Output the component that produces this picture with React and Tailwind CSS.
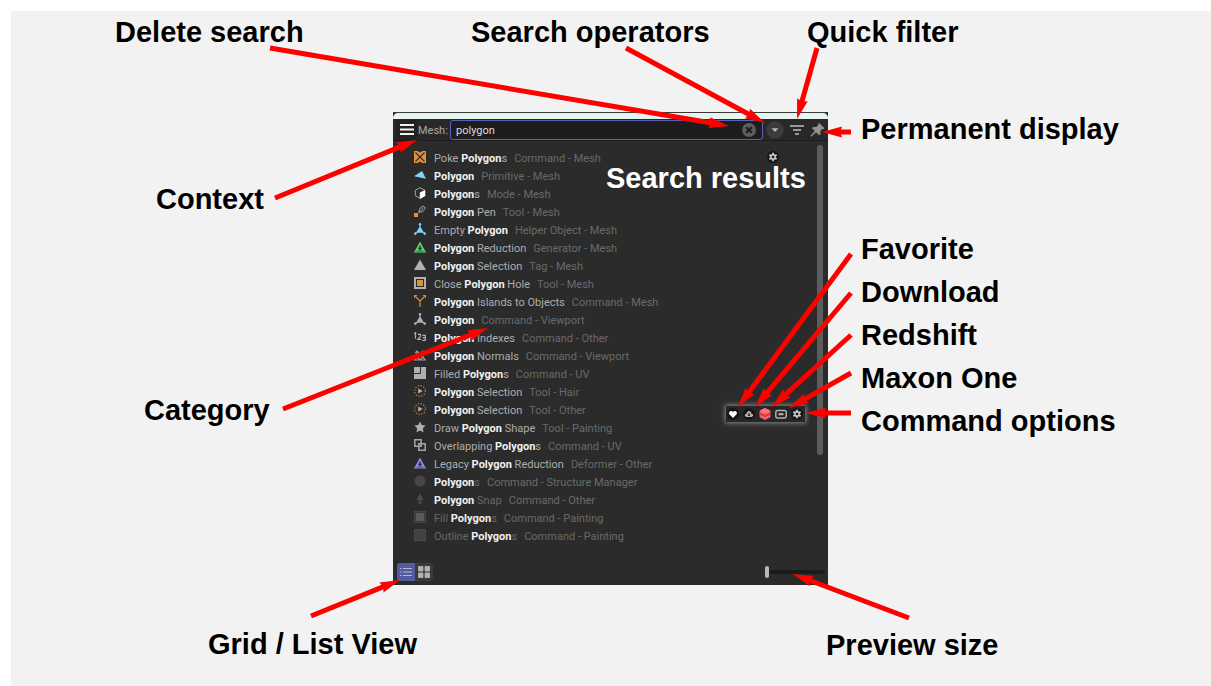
import { useState } from "react";

const rows = [
  { icon: "poke", parts: ["Poke ", "Polygon", "s"], category: "Command - Mesh", options: true },
  { icon: "primitive", parts: ["", "Polygon", ""], category: "Primitive - Mesh" },
  { icon: "mode", parts: ["", "Polygon", "s"], category: "Mode - Mesh" },
  { icon: "pen", parts: ["", "Polygon", " Pen"], category: "Tool - Mesh" },
  { icon: "emptyBlue", parts: ["Empty ", "Polygon", ""], category: "Helper Object - Mesh" },
  { icon: "reduceGreen", parts: ["", "Polygon", " Reduction"], category: "Generator - Mesh" },
  { icon: "triangle", parts: ["", "Polygon", " Selection"], category: "Tag - Mesh" },
  { icon: "hole", parts: ["Close ", "Polygon", " Hole"], category: "Tool - Mesh" },
  { icon: "islands", parts: ["", "Polygon", " Islands to Objects"], category: "Command - Mesh" },
  { icon: "emptyGray", parts: ["", "Polygon", ""], category: "Command - Viewport" },
  { icon: "indexes", parts: ["", "Polygon", " Indexes"], category: "Command - Other" },
  { icon: "normals", parts: ["", "Polygon", " Normals"], category: "Command - Viewport" },
  { icon: "filled", parts: ["Filled ", "Polygon", "s"], category: "Command - UV" },
  { icon: "select", parts: ["", "Polygon", " Selection"], category: "Tool - Hair" },
  { icon: "select", parts: ["", "Polygon", " Selection"], category: "Tool - Other" },
  { icon: "star", parts: ["Draw ", "Polygon", " Shape"], category: "Tool - Painting" },
  { icon: "overlap", parts: ["Overlapping ", "Polygon", "s"], category: "Command - UV" },
  { icon: "reducePurple", parts: ["Legacy ", "Polygon", " Reduction"], category: "Deformer - Other" },
  { icon: "blob", parts: ["", "Polygon", "s"], category: "Command - Structure Manager", dim: true },
  { icon: "snap", parts: ["", "Polygon", " Snap"], category: "Command - Other", dim: true },
  { icon: "fill", parts: ["Fill ", "Polygon", "s"], category: "Command - Painting", dim: true },
  { icon: "outline", parts: ["Outline ", "Polygon", "s"], category: "Command - Painting", dim: true },
];

const labels = [
  { text: "Delete search", pos: "left-[115px] top-[16px]" },
  { text: "Search operators", pos: "left-[471px] top-[16px]" },
  { text: "Quick filter", pos: "left-[807px] top-[16px]" },
  { text: "Permanent display", pos: "left-[861px] top-[113px]" },
  { text: "Context", pos: "left-[156px] top-[183px]" },
  { text: "Search results", pos: "left-[606px] top-[162px] text-white" },
  { text: "Favorite", pos: "left-[861px] top-[233px]" },
  { text: "Download", pos: "left-[861px] top-[276px]" },
  { text: "Redshift", pos: "left-[861px] top-[319px]" },
  { text: "Maxon One", pos: "left-[861px] top-[362px]" },
  { text: "Command options", pos: "left-[861px] top-[405px]" },
  { text: "Category", pos: "left-[144px] top-[394px]" },
  { text: "Grid / List View", pos: "left-[208px] top-[628px]" },
  { text: "Preview size", pos: "left-[826px] top-[629px]" },
];

// from x, from y, to x, to y
const arrows = [
  [270, 48, 729, 126],
  [626, 48, 765, 123],
  [817, 48, 797, 119],
  [851, 132, 822, 132],
  [275, 198, 417, 140],
  [283, 409, 488, 328],
  [851, 254, 738, 407],
  [851, 293, 755, 407],
  [851, 335, 772, 407],
  [851, 373, 789, 408],
  [851, 413, 806, 413],
  [311, 616, 400, 580],
  [909, 618, 793, 574],
];

const Nodes = ({ color }) => (
  <g fill={color}>
    <path d="M6 3 10 9.8H2Z" />
    <path d="M6 1v3M1.5 10.5 4 9M10.5 10.5 8 9" stroke={color} strokeWidth="1" />
    <circle cx="6" cy="1.2" r="1.2" />
    <circle cx="1.3" cy="10.6" r="1.3" />
    <circle cx="10.7" cy="10.6" r="1.3" />
  </g>
);

const Reduce = ({ color }) => (
  <g>
    <path d="M6 .5 12 11.5H0Z" fill={color} />
    <path d="M5.3 4.5h1.4v2.3h1.6L6 9.4 3.7 6.8h1.6Z" fill="#2b2b2b" />
    <path d="M2.6 10.1h6.8" stroke="#2b2b2b" strokeWidth=".7" />
  </g>
);

const glyphs = {
  poke: (
    <>
      <path d="M0 0h12v12H0Z" fill="#e0913c" />
      <path d="m1.5 1.5 9 9M10.5 1.5l-9 9" stroke="#2b2b2b" strokeWidth="1.1" />
      <path d="M3.5 0h5L6 1.4ZM3.5 12h5L6 10.6Z" fill="#2b2b2b" />
    </>
  ),
  primitive: <path d="M0 7.2 8 2l4 7.8Z" fill="#7fd4f7" />,
  mode: (
    <>
      <path d="M6 .7 1.3 3.2v5.5L6 11.3l4.7-2.6V3.2Z" fill="#2b2b2b" stroke="#a5a5a5" strokeWidth="1" />
      <path d="M5.8 5.6 11.2 3v6l-5.4 3Z" fill="#fff" />
    </>
  ),
  pen: (
    <>
      <rect y="8" width="4" height="4" fill="#e0913c" />
      <path d="M4.8 7.5 5.8 3.2l3-2 2.3 2.2-2 3Z M4.8 7.5 8 4.3 M9 .6l2.5 2.5" fill="none" stroke="#a5a5a5" strokeWidth=".9" />
      <circle cx="8.2" cy="4" r=".8" fill="#a5a5a5" />
    </>
  ),
  emptyBlue: <Nodes color="#7fd4f7" />,
  emptyGray: <Nodes color="#b0b0b0" />,
  reduceGreen: <Reduce color="#5bd76f" />,
  reducePurple: <Reduce color="#8d8cf0" />,
  triangle: <path d="M6 .5 12 11H0Z" fill="#b0b0b0" />,
  hole: (
    <>
      <rect x="1" y="1" width="10" height="10" fill="#2b2b2b" stroke="#b0b0b0" strokeWidth="2" />
      <rect x="3" y="3" width="6" height="6" fill="#e0913c" />
    </>
  ),
  islands: (
    <>
      <path d="M6 12V6L2 2M6 6l4-4" fill="none" stroke="#d98a3a" strokeWidth="1.2" />
      <path d="M0 0h3.5L0 3.5ZM12 0H8.5L12 3.5Z" fill="#d98a3a" />
    </>
  ),
  indexes: (
    <path
      d="M0 2.8 1.5 1.8v6M3.7 3.3h2.8v2L3.8 8.3h3.4M8.3 4.3h3v5h-3M8.8 6.7h2.3"
      fill="none"
      stroke="#b0b0b0"
      strokeWidth="1.2"
    />
  ),
  normals: (
    <path
      d="M0 11h12M3 9V2M9 9V2M1.2 3.8 3 2l1.8 1.8M7.2 3.8 9 2l1.8 1.8M1 11l2-3 3 3 3-3 2 3"
      fill="none"
      stroke="#a0a0a0"
      strokeWidth="1.2"
    />
  ),
  filled: (
    <>
      <rect width="12" height="12" fill="#b0b0b0" />
      <path d="M0 6.5h6.5V0" fill="none" stroke="#2b2b2b" strokeWidth="1" />
    </>
  ),
  select: (
    <>
      <circle cx="6" cy="6" r="5.4" fill="none" stroke="#d98a3a" strokeWidth="1.1" strokeDasharray="1.3 1.53" />
      <path d="M4.2 3.4 8.8 6 4.2 8.6Z" fill="#b0b0b0" />
    </>
  ),
  star: <path d="m6 .4 1.7 3.6 3.9.5-2.8 2.8.7 4L6 9.4l-3.5 1.9.7-4L.4 4.5l3.9-.5Z" fill="#b0b0b0" />,
  overlap: (
    <path d="M.8.8h6.4v6.4H.8ZM4.8 4.8h6.4v6.4H4.8Z" fill="none" stroke="#a5a5a5" strokeWidth="1.5" />
  ),
  blob: <circle cx="6" cy="6" r="5.3" fill="#474747" stroke="#444" strokeWidth="1" strokeDasharray="1.5 1" />,
  snap: <path d="M6 .5 9.7 7.2H2.3ZM5.2 7h1.6v2H5.2ZM3.2 9h5.6L6 11.5Z" fill="#4c4c4c" />,
  fill: (
    <>
      <rect x=".5" y=".5" width="11" height="11" fill="#3a3a3a" stroke="#454545" />
      <rect x="2" y="2" width="8" height="8" fill="#595959" />
    </>
  ),
  outline: <rect x=".5" y=".5" width="11" height="11" fill="#414141" stroke="#4a4a4a" />,
};

const RowIcon = ({ name }) => (
  <svg viewBox="0 0 12 12" className="w-3 h-3 shrink-0" aria-hidden="true">
    {glyphs[name]}
  </svg>
);

const Gear = () => (
  <svg viewBox="0 0 12 12" className="w-3 h-3" aria-hidden="true">
    <circle cx="6" cy="6" r="6" fill="#161616" />
    <path
      d="M6 1.8v8.4M2.36 3.9l7.28 4.2M9.64 3.9 2.36 8.1"
      stroke="#c4c4c4"
      strokeWidth="1.9"
    />
    <circle cx="6" cy="6" r="2.9" fill="#c4c4c4" />
    <circle cx="6" cy="6" r="1.3" fill="#161616" />
  </svg>
);

const ResultRow = ({ row }) => {
  const [before, match, after] = row.parts;
  return (
    <li className="flex items-center h-[18px] pr-[38px]">
      <button className="flex items-center h-[18px] gap-2 whitespace-pre text-left">
        <RowIcon name={row.icon} />
        <span className={row.dim ? "pt-1 text-[#686868]" : "pt-1 text-[#adadad]"}>
          {before}
          <b className="font-bold text-[#f0f0f0]">{match}</b>
          {after}
          <span className="ml-[7px] text-[#6a6a6a]">{row.category}</span>
        </span>
      </button>
      {row.options && (
        <button className="ml-auto" aria-label="Command options">
          <Gear />
        </button>
      )}
    </li>
  );
};

const Header = ({ query, setQuery }) => (
  <div className="flex items-center h-[22px] pl-[3px] bg-[#282828] border-b border-[#1d1d1d]">
    <button className="flex items-center justify-center w-[21px] h-5 bg-[#222]" aria-label="Menu">
      <svg viewBox="0 0 14 11" className="w-[14px] h-[11px]">
        <path d="M0 1h14M0 5.5h14M0 10h14" stroke="#f2f2f2" strokeWidth="2" />
      </svg>
    </button>
    <label htmlFor="search" className="w-[33px] pl-[1px] pt-[2px] text-[#a8a8a8]">
      Mesh:
    </label>
    <div className="flex flex-1 items-center h-5 min-w-0 rounded-[3px] border border-[#5b60b8] bg-[#1d1d1d]">
      <input
        id="search"
        value={query}
        onChange={(e) => setQuery(e.target.value)}
        className="flex-1 min-w-0 pl-[5px] pt-[2px] text-[#dcdcdc] bg-transparent outline-none"
      />
      <button onClick={() => setQuery("")} className="mr-[6px]" aria-label="Delete search">
        <svg viewBox="0 0 14 14" className="w-[14px] h-[14px]">
          <circle cx="7" cy="7" r="7" fill="#5d5d5d" />
          <path d="m4.2 4.2 5.6 5.6M9.8 4.2 4.2 9.8" stroke="#1d1d1d" strokeWidth="2.2" />
        </svg>
      </button>
    </div>
    <button className="ml-[3px]" aria-label="Search operators">
      <svg viewBox="0 0 18 18" className="w-[18px] h-[18px]">
        <circle cx="9" cy="9" r="8.7" fill="#3c3c3c" />
        <path d="M5.5 7.3h7L9 11Z" fill="#b5b5b5" />
      </svg>
    </button>
    <button className="ml-[5px]" aria-label="Quick filter">
      <svg viewBox="0 0 16 12" className="w-4 h-3">
        <path d="M1 2h14M4 6h8M6 10h4" stroke="#999" strokeWidth="2" />
      </svg>
    </button>
    <button className="ml-[5px] mr-[3px]" aria-label="Permanent display">
      <svg viewBox="0 0 15 14" className="w-[15px] h-[14px]">
        <path d="m9.2 0 5.4 5.2-1.4 1-1-.2-1.9 2 .2 3-1.4 1.2-3-3-5 4.6-.8-.8L4.8 8 2 5.2l1.2-1.3 3 .2L8.4 2l-.3-1.2Z" fill="#929292" />
      </svg>
    </button>
  </div>
);

const CommandIcons = () => (
  <div className="absolute right-[23px] top-[294px] flex items-center gap-1 h-4 pl-[1px] pr-[2px] bg-[#262626] shadow-[0_0_5px_1px_#8a8a8a]">
    <button aria-label="Favorite">
      <svg viewBox="0 0 12 12" className="w-3 h-3">
        <circle cx="6" cy="6" r="6" fill="#141414" />
        <path d="M6 10 2.4 6.3C.8 4.2 4.2 1.4 6 4c1.8-2.6 5.2.2 3.6 2.3Z" fill="#fff" />
      </svg>
    </button>
    <button aria-label="Download">
      <svg viewBox="0 0 12 12" className="w-3 h-3">
        <circle cx="6" cy="6" r="6" fill="#141414" />
        <path d="M3.8 9C1 8.8 1.3 5.7 3.6 5.8 3.8 2.2 8.2 2.2 8.4 5.8c2.3-.1 2.6 3-.2 3.2Z" fill="#b5b5b5" />
        <path d="M6 5v2.8M4.8 6.6 6 7.9l1.2-1.3" fill="none" stroke="#141414" strokeWidth="1" />
      </svg>
    </button>
    <button aria-label="Redshift">
      <svg viewBox="0 0 12 12" className="w-3 h-3">
        <path d="M6 0 .6 2.8v6.4L6 12l5.4-2.8V2.8Z" fill="#f06264" />
        <path d="M6 0 .6 2.8 6 5.4l5.4-2.6Z" fill="#ff7575" />
        <path d="M.6 4.4 6 7l5.4-2.6v2L6 9 .6 6.4Z" fill="#d8353a" />
      </svg>
    </button>
    <button aria-label="Maxon One">
      <svg viewBox="0 0 12 12" className="w-3 h-3">
        <rect x=".8" y="2.5" width="10.4" height="7.4" rx="2" fill="#222" stroke="#b0b0b0" strokeWidth="1.5" />
        <path d="M3.5 6.2h5" stroke="#b0b0b0" strokeWidth="2.2" />
      </svg>
    </button>
    <button aria-label="Command options">
      <Gear />
    </button>
  </div>
);

const Footer = () => (
  <div className="flex items-center justify-between pt-[18px] pb-1 pl-1 pr-[3px]">
    <div className="flex rounded-[3px] overflow-hidden bg-[#3a3a3a]">
      <button className="flex items-center justify-center w-[18px] h-[18px] bg-[#545a9e]" aria-label="List view">
        <svg viewBox="0 0 12 10" className="w-3 h-[10px]">
          <path d="M3 1.5h9M3 5h9M3 8.5h9M0 1.5h1.5M0 5h1.5M0 8.5h1.5" stroke="#b9b9c6" strokeWidth="1.2" />
        </svg>
      </button>
      <button className="flex items-center justify-center w-[18px] h-[18px]" aria-label="Grid view">
        <svg viewBox="0 0 12 12" className="w-3 h-3" fill="#b0b0b0">
          <rect width="5.4" height="5.4" rx="1" />
          <rect x="6.6" width="5.4" height="5.4" rx="1" />
          <rect y="6.6" width="5.4" height="5.4" rx="1" />
          <rect x="6.6" y="6.6" width="5.4" height="5.4" rx="1" />
        </svg>
      </button>
    </div>
    <input
      type="range"
      min="0"
      max="100"
      defaultValue="0"
      aria-label="Preview size"
      className="w-[60px] h-3 appearance-none bg-transparent [&::-webkit-slider-runnable-track]:h-1 [&::-webkit-slider-runnable-track]:rounded-full [&::-webkit-slider-runnable-track]:bg-[#1b1b1b] [&::-webkit-slider-thumb]:appearance-none [&::-webkit-slider-thumb]:w-1 [&::-webkit-slider-thumb]:h-3 [&::-webkit-slider-thumb]:-mt-1 [&::-webkit-slider-thumb]:rounded-[2px] [&::-webkit-slider-thumb]:bg-[#b8b8b8]"
    />
  </div>
);

const Arrow = ({ points }) => {
  const [x1, y1, x2, y2] = points;
  const length = Math.hypot(x2 - x1, y2 - y1);
  const angle = (Math.atan2(y2 - y1, x2 - x1) * 180) / Math.PI;
  return (
    <g transform={`translate(${x2} ${y2}) rotate(${angle})`}>
      <path d={`M0 0-20-5.5-19-2.5H${-length}V2.5H-19L-20 5.5Z`} fill="#f00" />
    </g>
  );
};

const Annotations = () => (
  <div className="absolute -left-[393px] -top-[112px] w-[1211px] h-[686px] pointer-events-none">
    {labels.map((label) => (
      <p
        key={label.text}
        className={`absolute whitespace-nowrap font-bold text-[29px] leading-8 font-['Liberation_Sans',Arial,sans-serif] ${label.pos}`}
      >
        {label.text}
      </p>
    ))}
    <svg viewBox="0 0 1211 686" className="absolute inset-0 w-full h-full" aria-hidden="true">
      {arrows.map((points) => (
        <Arrow key={points.join()} points={points} />
      ))}
    </svg>
  </div>
);

const App = () => {
  const [query, setQuery] = useState("polygon");

  return (
    <div className="min-h-screen flex pl-[11px] pt-[11px] bg-white overflow-hidden">
      <main className="flex-1 pt-[101px] pr-px bg-[#f2f2f2] text-black">
        <div className="relative w-full max-w-[435px] mx-auto">
          <section className="bg-[#2b2b2b] border-t border-[#3a3a3a] text-[11px] leading-4 font-[Roboto,'Noto_Sans',sans-serif]">
            <div className="h-[6px] rounded-t-[5px] bg-[#e6f6ee]" />
            <Header query={query} setQuery={setQuery} />
            <div className="flex pt-1">
              <ul className="flex-1 pl-[21px] pt-[3px] pb-px">
                {rows.map((row, i) => (
                  <ResultRow key={i} row={row} />
                ))}
              </ul>
              <div className="w-[6px] h-[310px] mr-[5px] rounded-full bg-[#5c5c5c]" />
            </div>
            <Footer />
          </section>
          <CommandIcons />
          <Annotations />
        </div>
      </main>
    </div>
  );
};

export default App;
